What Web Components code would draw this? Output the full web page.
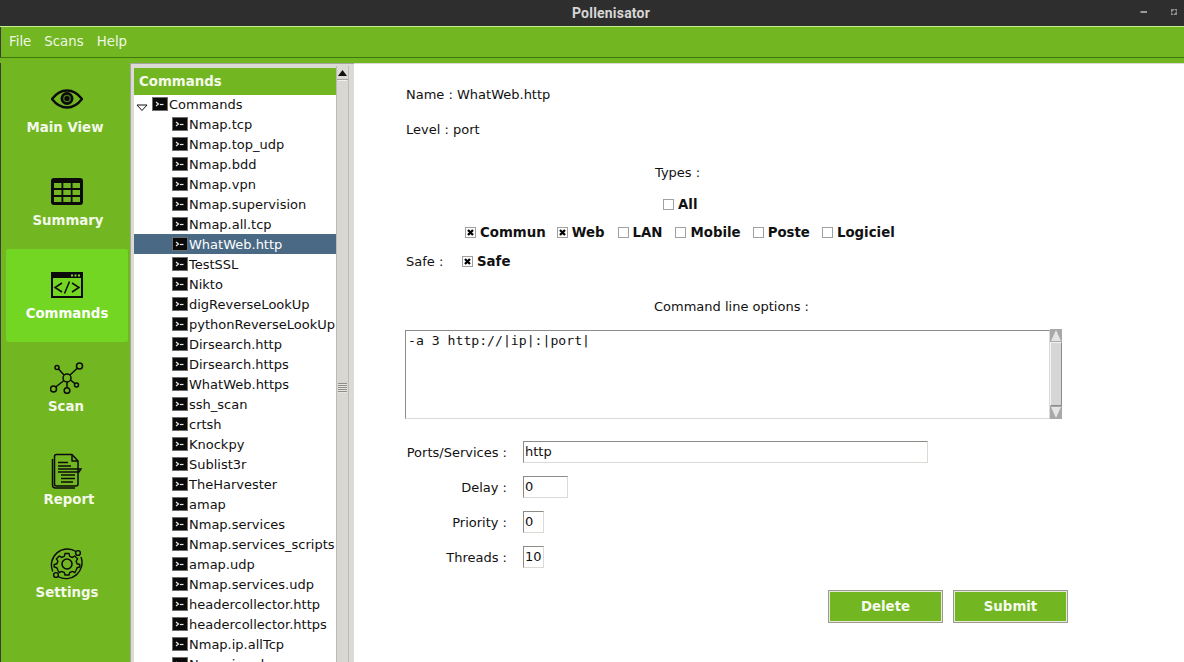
<!DOCTYPE html>
<html>
<head>
<meta charset="utf-8">
<title>Pollenisator</title>
<style>
html, body { margin: 0; padding: 0; height: 100%; overflow: hidden; background: #fff; font-family: "DejaVu Sans", sans-serif; font-size: 13px; color: #111; }
</style>
</head>
<body>
<pollen-app>
    <window-titlebar slot="top">Pollenisator</window-titlebar>
    <menu-bar slot="top"><span>File</span><span>Scans</span><span>Help</span></menu-bar>

    <side-nav slot="nav">
        <nav-item label="Main View" dx="-2">
            <svg viewBox="0 0 32 20" width="32" height="20"><path d="M1 10C6 3.500 11 1.500 16 1.500S26 3.500 31 10C26 16.500 21 18.500 16 18.500S6 16.500 1 10Z" fill="none" stroke="#0b0b0b" stroke-width="2.400"/><circle cx="16" cy="9.500" r="6.500" fill="#0b0b0b"/><circle cx="16" cy="9.500" r="3.800" fill="#4e7d18"/><circle cx="16" cy="9.500" r="2.600" fill="#0b0b0b"/></svg>
        </nav-item>
        <nav-item label="Summary" dx="1">
            <svg viewBox="0 0 32 28" width="32" height="28"><rect width="32" height="27" rx="3" fill="#0b0b0b"/><g fill="#72b622"><rect x="3" y="5" width="7.500" height="5"/><rect x="12.300" y="5" width="7.500" height="5"/><rect x="21.500" y="5" width="7.500" height="5"/><rect x="3" y="12" width="7.500" height="5"/><rect x="12.300" y="12" width="7.500" height="5"/><rect x="21.500" y="12" width="7.500" height="5"/><rect x="3" y="19" width="7.500" height="5"/><rect x="12.300" y="19" width="7.500" height="5"/><rect x="21.500" y="19" width="7.500" height="5"/></g></svg>
        </nav-item>
        <nav-item label="Commands" active>
            <svg viewBox="0 0 32 26" width="32" height="26"><rect x="1" y="1" width="30" height="24" fill="none" stroke="#0b0b0b" stroke-width="2"/><rect x="1" y="1" width="30" height="5" fill="#0b0b0b"/><g fill="#7ad824"><rect x="20" y="2.500" width="2" height="2"/><rect x="23.500" y="2.500" width="2" height="2"/><rect x="27" y="2.500" width="2" height="2"/></g><path d="M11 11L4 15.500L11 20M21 11L28 15.500L21 20M18.500 9.500L13.500 21.500" fill="none" stroke="#0b0b0b" stroke-width="1.500"/></svg>
        </nav-item>
        <nav-item label="Scan" dx="-1">
            <svg viewBox="0 0 34 32" width="34" height="32"><g fill="none" stroke="#0b0b0b" stroke-width="1.500"><circle cx="17" cy="16" r="4"/><circle cx="29.500" cy="4" r="3"/><circle cx="7" cy="5.500" r="2"/><circle cx="3.500" cy="27" r="3"/><circle cx="17" cy="28.500" r="2.800"/><circle cx="26.500" cy="23" r="2"/><path d="M20 13L27.300 6.200M14 13L8.500 7M14 18.500L5.700 25M17 20V25.700M20.500 18L25 21.700"/></g></svg>
        </nav-item>
        <nav-item label="Report" dx="2">
            <svg viewBox="0 0 32 36" width="32" height="36"><g fill="none" stroke="#0b0b0b" stroke-width="1.500" stroke-linejoin="round"><path d="M21 1.500H5.500Q3.500 1.500 3.500 3.500V31Q3.500 33 5.500 33H25Q27 33 27 31V8Z"/><path d="M21 1.500V8H27"/><path d="M1.500 6V32Q1.500 35 4.500 35H24"/></g><path d="M7 9.500H17M7 13H20M7 16H30L28 19H7M10 22H24M10 25.500H24M10 29H22" fill="none" stroke="#0b0b0b" stroke-width="1.400"/></svg>
        </nav-item>
        <nav-item label="Settings">
            <svg viewBox="0 0 34 34" width="34" height="34"><g fill="none" stroke="#0b0b0b"><circle cx="17" cy="17" r="5" stroke-width="1.600"/><path stroke-width="1.400" d="M15 6.500H19L19.700 9.300L22.300 10.400L24.800 9L27.600 11.800L26.100 14.200L27.200 16.800L29.800 17.500V20L27.200 20.700L26.100 23.300L24.800 25.500L22.300 24.400L19.700 25.500L19 28H15L14.300 25.500L11.700 24.400L9.200 25.500L7.900 23.300L6.800 20.700L4.200 20V17.500L6.800 16.800L7.900 14.200L6.400 11.800L9.200 9L11.700 10.400L14.300 9.300Z"/><path stroke-width="1.400" d="M26 4.500A16 16 0 0 0 2.800 24.500M8 29.500A16 16 0 0 0 31 10"/><circle cx="28" cy="6" r="2.400" stroke-width="1.400"/><circle cx="6" cy="28" r="2.400" stroke-width="1.400"/></g></svg>
        </nav-item>
    </side-nav>

    <tree-panel slot="tree" heading="Commands">
        <tree-row root>Commands</tree-row>
        <tree-row>Nmap.tcp</tree-row>
        <tree-row>Nmap.top_udp</tree-row>
        <tree-row>Nmap.bdd</tree-row>
        <tree-row>Nmap.vpn</tree-row>
        <tree-row>Nmap.supervision</tree-row>
        <tree-row>Nmap.all.tcp</tree-row>
        <tree-row selected>WhatWeb.http</tree-row>
        <tree-row>TestSSL</tree-row>
        <tree-row>Nikto</tree-row>
        <tree-row>digReverseLookUp</tree-row>
        <tree-row>pythonReverseLookUp</tree-row>
        <tree-row>Dirsearch.http</tree-row>
        <tree-row>Dirsearch.https</tree-row>
        <tree-row>WhatWeb.https</tree-row>
        <tree-row>ssh_scan</tree-row>
        <tree-row>crtsh</tree-row>
        <tree-row>Knockpy</tree-row>
        <tree-row>Sublist3r</tree-row>
        <tree-row>TheHarvester</tree-row>
        <tree-row>amap</tree-row>
        <tree-row>Nmap.services</tree-row>
        <tree-row>Nmap.services_scripts</tree-row>
        <tree-row>amap.udp</tree-row>
        <tree-row>Nmap.services.udp</tree-row>
        <tree-row>headercollector.http</tree-row>
        <tree-row>headercollector.https</tree-row>
        <tree-row>Nmap.ip.allTcp</tree-row>
        <tree-row>Nmap.ip.udp</tree-row>
    </tree-panel>

    <command-form slot="main"></command-form>
</pollen-app>

<script>
// small helper, every element below builds its shadow the same way
class ShadowElement extends HTMLElement {
    constructor(){
        super();
        let template = document.createElement('template');
        template.innerHTML = this._getTemplate();
        this.attachShadow({mode:'open'}).appendChild(template.content.cloneNode(true));
    }
    _getTemplate(){ return '' }
}

class PollenApp extends ShadowElement {
    _getTemplate(){
        return `
        <style>
            :host{ display:flex; flex-direction:column; width:1184px; height:662px; overflow:hidden; }
            .body{ flex:1; display:flex; min-height:0; background:#72b622; padding-top:5px; }
            .tree{ flex:none; }
            .main{ flex:1; min-width:0; background:#fff; border-top:1px solid #dcdad5; }
        </style>
        <slot name="top"></slot>
        <div class="body">
            <slot name="nav"></slot>
            <div class="tree"><slot name="tree"></slot></div>
            <div class="main"><slot name="main"></slot></div>
        </div>`
    }
}

class WindowTitlebar extends ShadowElement {
    _getTemplate(){
        return `
        <style>
            :host{ display:flex; align-items:center; justify-content:center; position:relative; height:26px; padding-left:38px; background:#2e2e2e; color:#d6d6d6; font:bold 14px "Roboto", "DejaVu Sans", sans-serif; letter-spacing:.2px; flex:none; border-bottom:1px solid #c6f08e; }
            .controls{ position:absolute; right:0; top:0; height:26px; }
            svg{ display:block; }
        </style>
        <slot></slot>
        <div class="controls">
            <svg width="60" height="26" viewBox="0 0 60 26"><rect x="16.500" y="11" width="6.500" height="2" fill="#9a9a9a"/><path d="M47 9H50V10L48 12H47ZM53 15H50V14L52 12H53Z M50 9H53V12Z M47 15V12L50 15Z" fill="#8c8c8c"/></svg>
        </div>`
    }
}

class MenuBar extends ShadowElement {
    _getTemplate(){
        return `
        <style>
            :host{ display:flex; align-items:center; gap:13px; height:29px; padding:0 0 1px 8px; background:#72b622; border-bottom:1px solid #3f7a08; color:#f0f6e4; font-size:13.33px; flex:none; box-sizing:content-box; border-left:1px solid #3c3c3c; }
            ::slotted(span){ display:block; }
        </style>
        <slot></slot>`
    }
}

class SideNav extends ShadowElement {
    _getTemplate(){
        return `
        <style>
            :host{ display:flex; flex-direction:column; width:128px; padding:0 0 0 2px; flex:none; background:#72b622; box-shadow:inset 1px 0 0 #3c3c3c; }
            .list{ padding:0 2px 0 4px; }
            ::slotted(nav-item){ display:block; }
        </style>
        <div class="list"><slot></slot></div>`
    }
}

class NavItem extends ShadowElement {
    _getTemplate(){
        return `
        <style>
            :host{ display:block; height:93px; }
            .tile{ height:93px; box-sizing:border-box; display:flex; flex-direction:column; align-items:center; border-radius:2px; color:#f4f9ea; font-weight:bold; font-size:13.33px; }
            :host([active]) .tile{ background:#72d622; color:#fff; }
            .icon{ height:38px; margin-top:17px; display:flex; align-items:center; justify-content:center; }
            .label{ line-height:20px; margin-top:0; white-space:nowrap; }
            ::slotted(svg){ display:block; }
        </style>
        <div class="tile">
            <div class="icon"><slot></slot></div>
            <div class="label"></div>
        </div>`
    }
    connectedCallback(){
        this.shadowRoot.querySelector('.label').textContent = this.getAttribute('label');
        let dx = parseInt(this.getAttribute('dx') || 0, 10);
        if (dx) this.shadowRoot.querySelector('.label').style.marginLeft = (dx * 2) + 'px';
    }
}

class TreePanel extends ShadowElement {
    _getTemplate(){
        return `
        <style>
            :host{ display:flex; width:224px; height:100%; box-sizing:border-box; background:#dcdad5; border:1px solid #a6a49e; border-width:1px 0 0 1px; padding:4px 5px 0 3px; flex:none; }
            .tree{ width:202px; background:#fff; overflow:hidden; height:594px; }
            .head{ height:27px; background:#72b622; color:#f4f9ea; font-weight:bold; font-size:13.33px; line-height:27px; padding-left:5px; }
            .rows{ margin-top:-1px; }
            .bar{ width:13px; box-sizing:border-box; margin-top:-2px; display:flex; flex-direction:column; border-left:1px solid #bdbbb5; border-right:1px solid #bdbbb5; background:#d9d7d2; position:relative; }
            .arrow{ height:13px; background:#dcdad5; border-bottom:1px solid #a6a49e; display:flex; align-items:center; justify-content:center; }
            .grip{ position:absolute; left:1px; right:1px; top:14px; height:590px; border-top:1px solid #f2f1ee; }
            .lines{ position:absolute; left:1px; right:1px; top:317px; height:10px; background:repeating-linear-gradient(#8f8d88 0 1px, #e8e6e2 1px 2px); }
        </style>
        <div class="tree">
            <div class="head"></div>
            <div class="rows"><slot></slot></div>
        </div>
        <div class="bar">
            <div class="arrow"><svg width="9" height="6"><path d="M4.500 0L9 6H0Z" fill="#111"/></svg></div>
            <div class="grip"></div>
            <div class="lines"></div>
        </div>`
    }
    connectedCallback(){
        this.shadowRoot.querySelector('.head').textContent = this.getAttribute('heading');
    }
}

class TreeRow extends ShadowElement {
    _getTemplate(){
        return `
        <style>
            :host{ display:flex; align-items:center; height:20px; padding-left:38px; color:#111; white-space:nowrap; font-size:13px; }
            :host([root]){ padding-left:0; }
            :host([selected]){ background:#4a6984; color:#fff; }
            .toggle{ display:none; width:18px; }
            :host([root]) .toggle{ display:block; }
            .term{ flex:none; width:16px; height:14px; margin-right:1px; box-sizing:border-box; background:#0a0a0a; border:1px solid #6e6e6e; display:block; }
        </style>
        <svg class="toggle" width="18" height="20" viewBox="0 0 18 20"><path d="M3 11H13L8 16.500Z" fill="#fff" stroke="#111"/></svg>
        <svg class="term" viewBox="0 0 14 12"><path d="M3 4L5.500 6L3 8" fill="none" stroke="#e8e8e8" stroke-width="1.200"/><path d="M7 6.500H10.500" stroke="#e8e8e8" stroke-width="1.200"/></svg>
        <span><slot></slot></span>`
    }
}

class CheckBox extends ShadowElement {
    _getTemplate(){
        return `
        <style>
            :host{ display:inline-flex; align-items:center; gap:4px; font-weight:bold; color:#111; font-size:13.33px; white-space:nowrap; }
            svg{ display:block; flex:none; }
            .mark{ display:none; }
            :host([checked]) .mark{ display:inline; }
        </style>
        <svg width="11" height="11" viewBox="0 0 11 11"><rect x=".5" y=".5" width="10" height="10" fill="#fff" stroke="#a0a0a0"/><path class="mark" d="M3 3L8 8M8 3L3 8" stroke="#000" stroke-width="2.300"/></svg>
        <slot></slot>`
    }
}

class TkEntry extends ShadowElement {
    _getTemplate(){
        return `
        <style>
            :host{ display:block; box-sizing:border-box; height:22px; border:1px solid; border-color:#8d8b86 #dcdad5 #dcdad5 #8d8b86; background:#fff; font-size:13px; line-height:20px; padding-left:1px; color:#111; }
        </style>
        <slot></slot>`
    }
}

class TkButton extends ShadowElement {
    _getTemplate(){
        return `
        <style>
            :host{ display:flex; align-items:center; justify-content:center; box-sizing:border-box; width:115px; height:33px; background:#72b622; border:1px solid #9d9b90; outline:1px solid #e6e8dc; outline-offset:-2px; color:#f6fbee; font-weight:bold; font-size:13.33px; }
        </style>
        <slot></slot>`
    }
}

class CommandForm extends ShadowElement {
    _getTemplate(){
        return `
        <style>
            :host{ display:block; font-size:13px; color:#111; }
            .form{ display:flex; flex-direction:column; padding:0 0 0 52px; width:664px; }
            .row{ display:flex; align-items:center; white-space:nowrap; }
            .name{ height:20px; margin-top:20px; }
            .level{ height:20px; margin-top:15px; }
            .types{ height:20px; margin-top:23px; padding-left:249px; }
            .all{ height:20px; margin-top:12px; padding-left:257px; }
            .cats{ height:20px; margin-top:8px; padding-left:59px; }
            .cats check-box{ margin-right:13px; }
            .cats check-box:first-child{ margin-right:11px; }
            .cats check-box:nth-child(4), .cats check-box:nth-child(5){ margin-right:12px; }
            .safe{ height:20px; margin-top:9px; }
            .safe span{ width:56px; }
            .opts{ height:20px; margin-top:25px; padding-left:248px; }
            .text-wrap{ display:flex; margin-top:14px; margin-left:-1px; height:89px; }
            .text{ width:645px; box-sizing:border-box; border:1px solid; border-color:#8d8b86 #dcdad5 #dcdad5 #8d8b86; padding:1px 2px 0; font:13.15px/18px "DejaVu Sans Mono", monospace; white-space:pre; }
            .scroll{ width:12px; margin-top:-1px; box-sizing:border-box; background:#a8a8a8; display:flex; flex-direction:column; }
            .scroll svg{ display:block; flex:none; }
            .thumb{ flex:1; background:#d6d6d6; border:1px solid; border-color:#f2f2f2 #8a8a8a #8a8a8a #f2f2f2; }
            .fields{ display:grid; grid-template-columns:101px auto; column-gap:16px; row-gap:13px; margin-top:22px; justify-items:start; align-items:center; }
            .fields label{ justify-self:end; white-space:nowrap; }
            .buttons{ display:flex; justify-content:flex-end; gap:10px; margin-top:22px; padding-right:2px; }
        </style>
        <div class="form">
            <div class="row name">Name : WhatWeb.http</div>
            <div class="row level">Level : port</div>
            <div class="row types">Types :</div>
            <div class="row all"><check-box>All</check-box></div>
            <div class="row cats">
                <check-box checked>Commun</check-box>
                <check-box checked>Web</check-box>
                <check-box>LAN</check-box>
                <check-box>Mobile</check-box>
                <check-box>Poste</check-box>
                <check-box>Logiciel</check-box>
            </div>
            <div class="row safe"><span>Safe :</span><check-box checked>Safe</check-box></div>
            <div class="row opts">Command line options :</div>
            <div class="text-wrap">
                <div class="text">-a 3 http://|ip|:|port|</div>
                <div class="scroll">
                    <svg width="12" height="13" viewBox="0 0 12 13"><path d="M6 1L11 12H1Z" fill="#e4e4e4"/></svg>
                    <div class="thumb"></div>
                    <svg width="12" height="13" viewBox="0 0 12 13"><path d="M6 12L11 1H1Z" fill="#e4e4e4"/></svg>
                </div>
            </div>
            <div class="fields">
                <label>Ports/Services :</label><tk-entry style="width:405px">http</tk-entry>
                <label>Delay :</label><tk-entry style="width:45px">0</tk-entry>
                <label>Priority :</label><tk-entry style="width:21px">0</tk-entry>
                <label>Threads :</label><tk-entry style="width:21px">10</tk-entry>
            </div>
            <div class="buttons"><tk-button>Delete</tk-button><tk-button>Submit</tk-button></div>
        </div>`
    }
}

window.customElements.define('pollen-app', PollenApp);
window.customElements.define('window-titlebar', WindowTitlebar);
window.customElements.define('menu-bar', MenuBar);
window.customElements.define('side-nav', SideNav);
window.customElements.define('nav-item', NavItem);
window.customElements.define('tree-panel', TreePanel);
window.customElements.define('tree-row', TreeRow);
window.customElements.define('check-box', CheckBox);
window.customElements.define('tk-entry', TkEntry);
window.customElements.define('tk-button', TkButton);
window.customElements.define('command-form', CommandForm);
</script>
</body>
</html>
